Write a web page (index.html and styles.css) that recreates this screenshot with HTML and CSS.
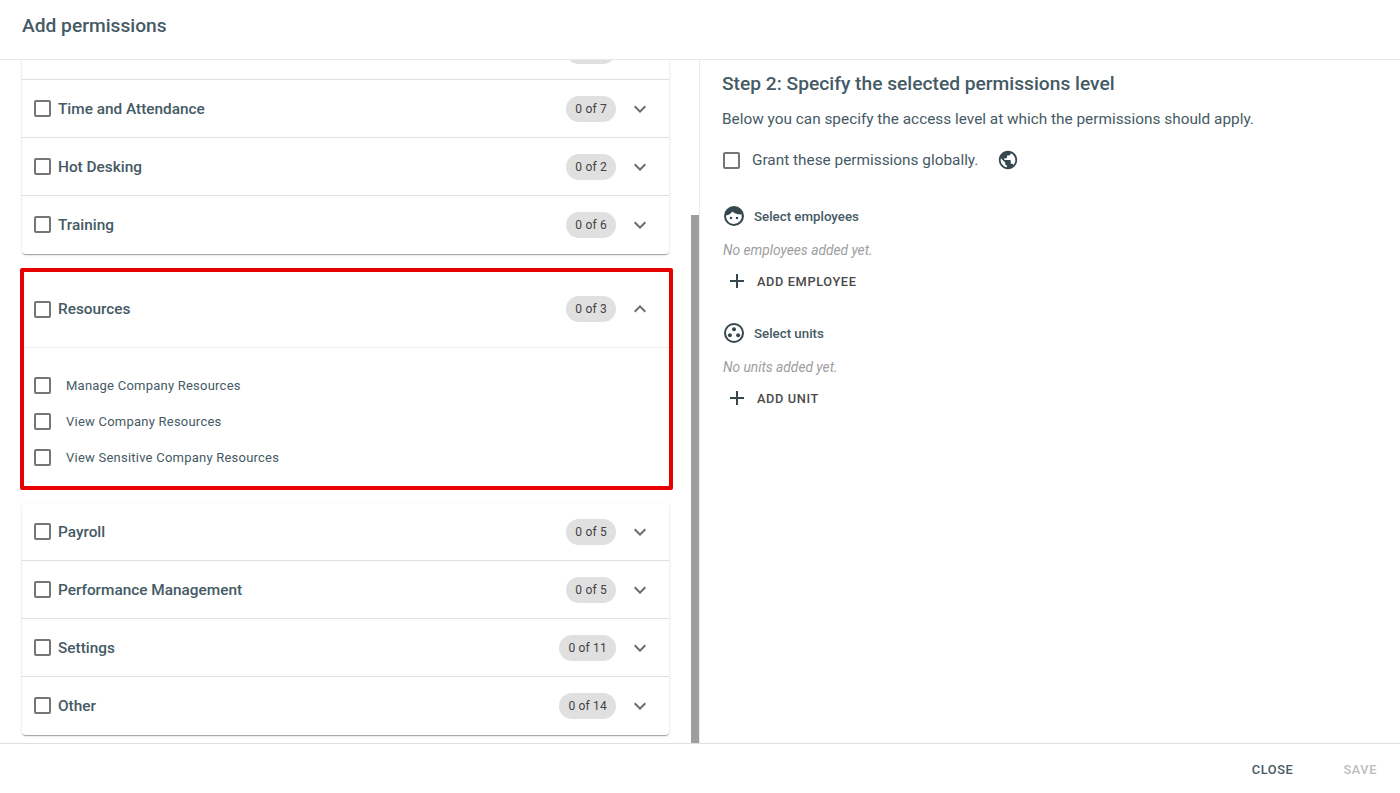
FILE: index.html
```html
<!DOCTYPE html>
<html lang="en">
<head>
<meta charset="utf-8">
<title>Add permissions</title>
<link rel="stylesheet" href="styles.css">
</head>
<body>
<svg class="sprite" aria-hidden="true">
  <symbol id="down" viewBox="0 0 24 24"><path d="M7.41 8.59 12 13.17l4.59-4.58L18 10l-6 6-6-6z"/></symbol>
  <symbol id="up" viewBox="0 0 24 24"><path d="M7.41 15.41 12 10.83l4.59 4.58L18 14l-6-6-6 6z"/></symbol>
  <symbol id="plus" viewBox="0 0 24 24"><path d="M19 13h-6v6h-2v-6H5v-2h6V5h2v6h6z"/></symbol>
</svg>
<div class="dialog">
  <header class="head">Add permissions</header>
  <main class="body">
    <section class="left">
      <div class="list">
        <div class="card">
          <div class="row"><span class="box"></span><span class="name"></span><span class="pill blank"></span><svg class="chev"><use href="#down"/></svg></div>
          <div class="row"><span class="box"></span><span class="name">Time and Attendance</span><span class="pill">0 of 7</span><svg class="chev"><use href="#down"/></svg></div>
          <div class="row"><span class="box"></span><span class="name">Hot Desking</span><span class="pill">0 of 2</span><svg class="chev"><use href="#down"/></svg></div>
          <div class="row"><span class="box"></span><span class="name">Training</span><span class="pill">0 of 6</span><svg class="chev"><use href="#down"/></svg></div>
        </div>
        <div class="card open">
          <div class="row tall"><span class="box"></span><span class="name">Resources</span><span class="pill">0 of 3</span><svg class="chev"><use href="#up"/></svg></div>
          <div class="items">
            <div class="item"><span class="box"></span><span>Manage Company Resources</span></div>
            <div class="item"><span class="box"></span><span>View Company Resources</span></div>
            <div class="item"><span class="box"></span><span>View Sensitive Company Resources</span></div>
          </div>
          <div class="mark"></div>
        </div>
        <div class="card">
          <div class="row"><span class="box"></span><span class="name">Payroll</span><span class="pill">0 of 5</span><svg class="chev"><use href="#down"/></svg></div>
          <div class="row"><span class="box"></span><span class="name">Performance Management</span><span class="pill">0 of 5</span><svg class="chev"><use href="#down"/></svg></div>
          <div class="row"><span class="box"></span><span class="name">Settings</span><span class="pill">0 of 11</span><svg class="chev"><use href="#down"/></svg></div>
          <div class="row"><span class="box"></span><span class="name">Other</span><span class="pill">0 of 14</span><svg class="chev"><use href="#down"/></svg></div>
        </div>
      </div>
      <div class="thumb"></div>
    </section>
    <section class="right">
      <h2 class="step">Step 2: Specify the selected permissions level</h2>
      <p class="intro">Below you can specify the access level at which the permissions should apply.</p>
      <div class="global">
        <span class="box"></span>
        <span class="global-text">Grant these permissions globally.</span>
        <svg class="globe" viewBox="0 0 24 24"><path d="M12 2C6.48 2 2 6.48 2 12s4.48 10 10 10 10-4.48 10-10S17.52 2 12 2zm-1 17.93c-3.95-.49-7-3.85-7-7.93 0-.62.08-1.21.21-1.79L9 15v1c0 1.1.9 2 2 2v1.93zm6.9-2.54c-.26-.81-1-1.39-1.9-1.39h-1v-3c0-.55-.45-1-1-1H8v-2h2c.55 0 1-.45 1-1V7h2c1.1 0 2-.9 2-2v-.41c2.93 1.19 5 4.06 5 7.41 0 2.08-.8 3.97-2.1 5.39z"/></svg>
      </div>
      <div class="group first">
        <div class="group-title">
          <svg class="gi" viewBox="0 0 24 24"><path d="M12 2a10 10 0 1 0 0 20 10 10 0 0 0 0-20zm0 18a8 8 0 0 1-8-8l.02-.4C6.6 11 9 9.6 10.2 7.4c1.7 1.6 4.6 3.1 9.5 3A8 8 0 0 1 12 20z"/><circle cx="9" cy="14" r="1.25"/><circle cx="15" cy="14" r="1.25"/></svg>
          <span>Select employees</span>
        </div>
        <div class="none">No employees added yet.</div>
        <div class="add"><svg class="plus"><use href="#plus"/></svg><span>ADD EMPLOYEE</span></div>
      </div>
      <div class="group">
        <div class="group-title">
          <svg class="gi" viewBox="0 0 24 24"><path d="M12 2a10 10 0 1 0 0 20 10 10 0 0 0 0-20zm0 18a8 8 0 1 1 0-16 8 8 0 0 1 0 16z"/><circle cx="12" cy="8.2" r="2"/><circle cx="7.9" cy="14.2" r="2"/><circle cx="16.1" cy="14.2" r="2"/></svg>
          <span>Select units</span>
        </div>
        <div class="none">No units added yet.</div>
        <div class="add"><svg class="plus"><use href="#plus"/></svg><span>ADD UNIT</span></div>
      </div>
    </section>
  </main>
  <footer class="foot">
    <span class="btn">CLOSE</span>
    <span class="btn off">SAVE</span>
  </footer>
</div>
</body>
</html>
```
FILE: styles.css
```css
* { box-sizing: border-box; }
html, body { margin: 0; height: 100%; background: #fff; }
body { font-family: Roboto, "Liberation Sans", sans-serif; color: #455a64; overflow: hidden; }
.sprite { display: none; }
.dialog { display: flex; flex-direction: column; height: 793px; }
.head { height: 60px; flex: none; padding: 14px 22px 0; font-size: 19.2px; font-weight: 500; line-height: 24px; border-bottom: 1px solid #e8e8e8; }
.body { flex: 1; display: flex; min-height: 0; }
.foot { height: 50px; flex: none; border-top: 1px solid #e0e0e0; display: flex; justify-content: flex-end; align-items: center; gap: 50px; padding: 2px 23px 0 0; }
.btn { font-size: 12.8px; font-weight: 500; letter-spacing: 0.6px; color: #455a64; }
.btn.off { color: #bdbdbd; }

.left { position: relative; width: 700px; flex: none; border-right: 1px solid #eaeaea; overflow: hidden; padding-left: 22px; }
.list { width: 647px; margin-top: -38px; display: flex; flex-direction: column; gap: 16px; }
.card { position: relative; background: #fff; border-radius: 4px; padding-bottom: 1px; box-shadow: 0 2px 1px -1px rgba(0,0,0,.2), 0 1px 1px 0 rgba(0,0,0,.14), 0 1px 3px 0 rgba(0,0,0,.12); }
.card.open { margin-top: 1px; padding-bottom: 0; }
.row { height: 58px; display: flex; align-items: center; padding-left: 12px; border-top: 1px solid #e0e0e0; }
.row:first-child { border-top: 0; height: 57px; }
.row.tall, .row.tall:first-child { height: 77px; border-top: 0; border-bottom: 1px solid #efefef; }
.box { width: 17px; height: 17px; flex: none; border: 2px solid #757575; border-radius: 2px; }
.name { flex: 1; margin-left: 7px; font-size: 15.36px; font-weight: 500; }
.pill { height: 26px; padding: 0 9px; border-radius: 13px; background: #e0e0e0; font-size: 12px; line-height: 26px; color: #424242; letter-spacing: .2px; }
.pill.blank { width: 50px; }
.chev { width: 24px; height: 24px; margin: 0 17px 0 12px; fill: #6b6b6b; flex: none; }
.items { padding: 19px 12px 12px; }
.item { height: 36px; display: flex; align-items: center; font-size: 13px; letter-spacing: .23px; color: #455a64; }
.item span:last-child { margin-left: 15px; }
.mark { position: absolute; left: -2px; right: -4px; top: -3px; bottom: -3px; border: 4px solid #e60000; border-radius: 2px; pointer-events: none; }
.thumb { position: absolute; right: 0; top: 155px; bottom: 0; width: 8px; background: #9e9e9e; }

.right { flex: 1; padding: 11px 0 0 22px; overflow: hidden; }
.step { margin: 0; font-size: 19.2px; font-weight: 500; line-height: 26px; }
.intro { margin: 12px 0 0; font-size: 15.36px; line-height: 20px; color: #455a64; }
.global { display: flex; align-items: center; margin-top: 20px; height: 22px; }
.global .box { margin-left: 1px; }
.global-text { margin-left: 12px; font-size: 15.36px; color: #455a64; }
.globe { width: 22px; height: 22px; margin-left: 19px; fill: #37474f; }
.group { margin-top: 28px; }
.group.first { margin-top: 33px; }
.group-title { display: flex; align-items: center; height: 24px; font-size: 13.3px; font-weight: 500; }
.gi { width: 24px; height: 24px; flex: none; fill: #37474f; }
.group-title span { margin-left: 8px; }
.none { margin: 14px 0 0 1px; font-size: 13.76px; font-style: italic; color: #9e9e9e; line-height: 16px; }
.add { display: flex; align-items: center; margin-top: 11px; height: 24px; font-size: 12.8px; font-weight: 500; letter-spacing: .6px; color: #4a4a4a; }
.plus { width: 24px; height: 24px; margin-left: 3px; fill: #37474f; }
.add span { margin-left: 8px; }
```
